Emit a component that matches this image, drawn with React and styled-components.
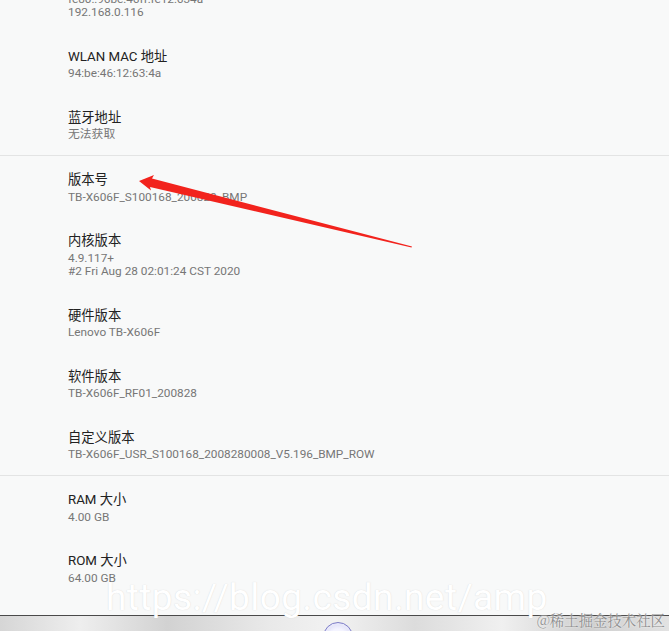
import React from "react";
import styled, { createGlobalStyle } from "styled-components";

const Global = createGlobalStyle`
  html, body { margin: 0; padding: 0; }
  body {
    width: 669px;
    height: 631px;
    overflow: hidden;
    background: #f8f9f9;
    font-family: Roboto, "Noto Sans CJK SC", sans-serif;
  }
`;

const Screen = styled.div`
  position: relative;
  width: 669px;
  height: 631px;
  overflow: hidden;
  display: flex;
  flex-direction: column;
  background: #f8f9f9;
`;

const ScrollArea = styled.div`
  flex: 1;
  overflow: hidden;
`;

const List = styled.div`
  margin-top: -42px;
  display: flex;
  flex-direction: column;
`;

const Section = styled.div`
  display: flex;
  flex-direction: column;
`;

const Divider = styled.div`
  height: 1.5px;
  background: #e3e4e4;
`;

const Row = styled.div`
  padding: 14px 0 13px 68px;
  display: flex;
  flex-direction: column;
`;

const Title = styled.div`
  font-size: 13.3px;
  line-height: 20.5px;
  color: #222222;
  font-family: Roboto, "Noto Sans CJK SC", sans-serif;
`;

const Value = styled.div`
  font-size: 11.8px;
  line-height: 13.5px;
  color: #767676;
  font-family: Roboto, "Noto Sans CJK SC", sans-serif;
`;

const NavBar = styled.div`
  height: 15px;
  flex: none;
  border-top: 1.5px solid #4a4a4a;
  background: linear-gradient(
    90deg,
    #d6d6d6 0%,
    #eeeeee 12%,
    #d2d2d2 25%,
    #e9e9e9 40%,
    #f2f2f2 50%,
    #dcdcdc 62%,
    #f0f0f0 75%,
    #cfcfcf 88%,
    #e2e2e2 100%
  );
  display: flex;
  justify-content: center;
  overflow: hidden;
`;

const HomeButton = styled.div`
  margin-top: 6px;
  margin-left: 6px;
  width: 28px;
  height: 28px;
  flex: none;
  border-radius: 50%;
  border: 1.5px solid #7e7ec8;
  background: radial-gradient(circle, #f4f4ff 40%, #c9c9ef 100%);
  box-shadow: inset 0 0 0 2px #e8e8fa;
`;

const Watermark = styled.div`
  position: absolute;
  left: 106px;
  top: 576px;
  font-size: 37px;
  line-height: 44px;
  letter-spacing: 0.4px;
  color: #ffffff;
  font-family: Roboto, sans-serif;
  text-shadow: 0 0 1px rgba(140, 140, 140, 0.35);
  white-space: nowrap;
  pointer-events: none;
`;

const Credit = styled.div`
  position: absolute;
  right: 4px;
  top: 611px;
  font-size: 14.4px;
  line-height: 18px;
  color: #8f8f8f;
  font-family: "Noto Serif CJK SC", "Noto Sans CJK SC", serif;
  text-shadow: 0 0 2px #ffffff;
  white-space: nowrap;
`;

const ArrowLayer = styled.svg`
  position: absolute;
  left: 0;
  top: 0;
  pointer-events: none;
`;

const groups = [
  [
    { title: "IP 地址", values: ["fe80::96be:46ff:fe12:634a", "192.168.0.116"] },
    { title: "WLAN MAC 地址", values: ["94:be:46:12:63:4a"] },
    { title: "蓝牙地址", values: ["无法获取"] },
  ],
  [
    { title: "版本号", values: ["TB-X606F_S100168_200828_BMP"] },
    { title: "内核版本", values: ["4.9.117+", "#2 Fri Aug 28 02:01:24 CST 2020"] },
    { title: "硬件版本", values: ["Lenovo TB-X606F"] },
    { title: "软件版本", values: ["TB-X606F_RF01_200828"] },
    { title: "自定义版本", values: ["TB-X606F_USR_S100168_2008280008_V5.196_BMP_ROW"] },
  ],
  [
    { title: "RAM 大小", values: ["4.00 GB"] },
    { title: "ROM 大小", values: ["64.00 GB"] },
  ],
];

export default function App() {
  return (
    <>
      <Global />
      <Screen>
        <ScrollArea>
          <List>
            {groups.map((rows, gi) => (
              <React.Fragment key={gi}>
                {gi > 0 && <Divider />}
                <Section>
                  {rows.map((r) => (
                    <Row key={r.title}>
                      <Title>{r.title}</Title>
                      {r.values.map((v) => (
                        <Value key={v}>{v}</Value>
                      ))}
                    </Row>
                  ))}
                </Section>
              </React.Fragment>
            ))}
          </List>
        </ScrollArea>
        <NavBar>
          <HomeButton />
        </NavBar>
        <Watermark>https://blog.csdn.net/amp</Watermark>
        <Credit>@稀土掘金技术社区</Credit>
        <ArrowLayer width="669" height="631" viewBox="0 0 669 631">
          <polygon
            points="139,181 154,175 152,178.5 412,246.5 411.5,247.5 150,187 151,190.5"
            fill="#f2231d"
          />
        </ArrowLayer>
      </Screen>
    </>
  );
}
